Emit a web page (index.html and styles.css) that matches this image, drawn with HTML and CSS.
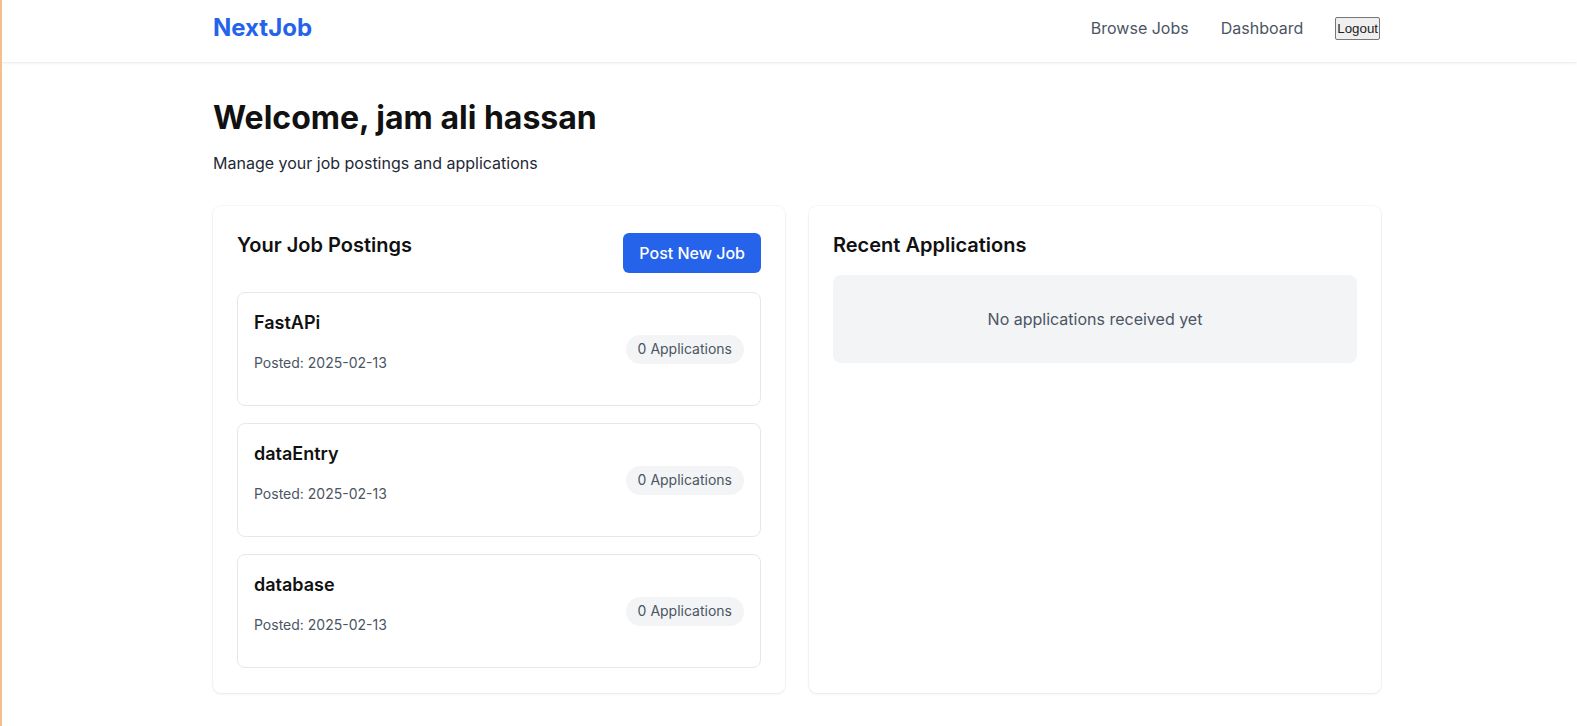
FILE: index.html
```html
<!DOCTYPE html>
<html lang="en">
<head>
<meta charset="utf-8">
<title>NextJob - Dashboard</title>
<link rel="stylesheet" href="styles.css">
</head>
<body>
<header class="site-header">
  <div class="container nav-row">
    <a class="logo" href="#">NextJob</a>
    <nav class="nav">
      <a class="nav-link" href="#">Browse Jobs</a>
      <a class="nav-link" href="#">Dashboard</a>
      <button class="logout" type="button">Logout</button>
    </nav>
  </div>
</header>
<main class="container main">
  <h1 class="welcome">Welcome, jam ali hassan</h1>
  <p class="subtitle">Manage your job postings and applications</p>
  <div class="grid">
    <section class="card">
      <div class="card-head">
        <h2 class="card-title">Your Job Postings</h2>
        <button class="btn-primary" type="button">Post New Job</button>
      </div>
      <div class="job-list">
        <div class="job">
          <div class="job-info">
            <h3 class="job-title">FastAPi</h3>
            <p class="job-date">Posted: 2025-02-13</p>
          </div>
          <span class="badge">0 Applications</span>
        </div>
        <div class="job">
          <div class="job-info">
            <h3 class="job-title">dataEntry</h3>
            <p class="job-date">Posted: 2025-02-13</p>
          </div>
          <span class="badge">0 Applications</span>
        </div>
        <div class="job">
          <div class="job-info">
            <h3 class="job-title">database</h3>
            <p class="job-date">Posted: 2025-02-13</p>
          </div>
          <span class="badge">0 Applications</span>
        </div>
      </div>
    </section>
    <section class="card">
      <h2 class="card-title card-title-solo">Recent Applications</h2>
      <div class="empty">No applications received yet</div>
    </section>
  </div>
</main>
</body>
</html>
```

FILE: styles.css
```css
* { box-sizing: border-box; }

html, body { height: 100%; }

body {
  margin: 0;
  border-left: 2px solid #f1c08e;
  background: #ffffff;
  font-family: Inter, "Noto Sans", "Liberation Sans", sans-serif;
  color: #111827;
}

.container {
  max-width: 1183px;
  margin: 0 auto;
  padding-left: 15px;
}

.site-header {
  background: #ffffff;
  box-shadow: 0 1px 3px rgba(0, 0, 0, 0.08), 0 1px 2px -1px rgba(0, 0, 0, 0.06);
}

.nav-row {
  display: flex;
  align-items: center;
  justify-content: space-between;
  padding-top: 12px;
  padding-bottom: 18px;
}

.logo {
  font-size: 24px;
  line-height: 32px;
  font-weight: 700;
  color: #2563eb;
  text-decoration: none;
}

.nav {
  display: flex;
  align-items: center;
  gap: 32px;
}

.nav-link {
  font-size: 16px;
  line-height: 24px;
  color: #4b5563;
  text-decoration: none;
}

.logout {
  font-family: "Liberation Sans", Arial, sans-serif;
  font-size: 13.333px;
  line-height: 19px;
  height: 23px;
  padding: 1px 1px;
  color: #222;
  background: #efefef;
  border: 1px solid #767676;
  border-radius: 2px;
  margin-right: 1px;
}

.main {
  padding-top: 36px;
}

.welcome {
  margin: 0;
  font-size: 32px;
  line-height: 40px;
  font-weight: 700;
  color: #111111;
}

.subtitle {
  margin: 13px 0 31px;
  font-size: 16px;
  line-height: 24px;
  color: #1f2937;
}

.grid {
  display: grid;
  grid-template-columns: 1fr 1fr;
  gap: 24px;
}

.card {
  background: #ffffff;
  border-radius: 8px;
  box-shadow: 0 1px 3px rgba(0, 0, 0, 0.08), 0 0 0 1px rgba(0, 0, 0, 0.025);
  padding: 25px 24px 25px;
}

.card-head {
  display: flex;
  align-items: center;
  justify-content: space-between;
  margin-bottom: 17px;
}

.card-title {
  margin: 0 0 16px;
  font-size: 20px;
  line-height: 28px;
  font-weight: 600;
  color: #111111;
}

.btn-primary {
  font-family: inherit;
  font-size: 16px;
  line-height: 24px;
  font-weight: 500;
  color: #ffffff;
  background: #2563eb;
  border: none;
  border-radius: 6px;
  padding: 8px 16px;
}

.job-list {
  display: flex;
  flex-direction: column;
  gap: 17px;
}

.job {
  display: flex;
  align-items: center;
  justify-content: space-between;
  border: 1px solid #e5e7eb;
  border-radius: 8px;
  padding: 16px;
}

.job-title {
  margin: 0 0 16px;
  font-size: 18px;
  line-height: 28px;
  font-weight: 600;
  color: #111111;
}

.job-date {
  margin: 0 0 16px;
  font-size: 14px;
  line-height: 20px;
  color: #4b5563;
}

.badge {
  font-size: 14px;
  line-height: 20px;
  color: #4b5563;
  background: #f3f4f6;
  border-radius: 9999px;
  padding: 4px 12px 5px;
}

.empty {
  background: #f3f4f6;
  border-radius: 8px;
  padding: 32px;
  text-align: center;
  font-size: 16px;
  line-height: 24px;
  color: #4b5563;
}
```
